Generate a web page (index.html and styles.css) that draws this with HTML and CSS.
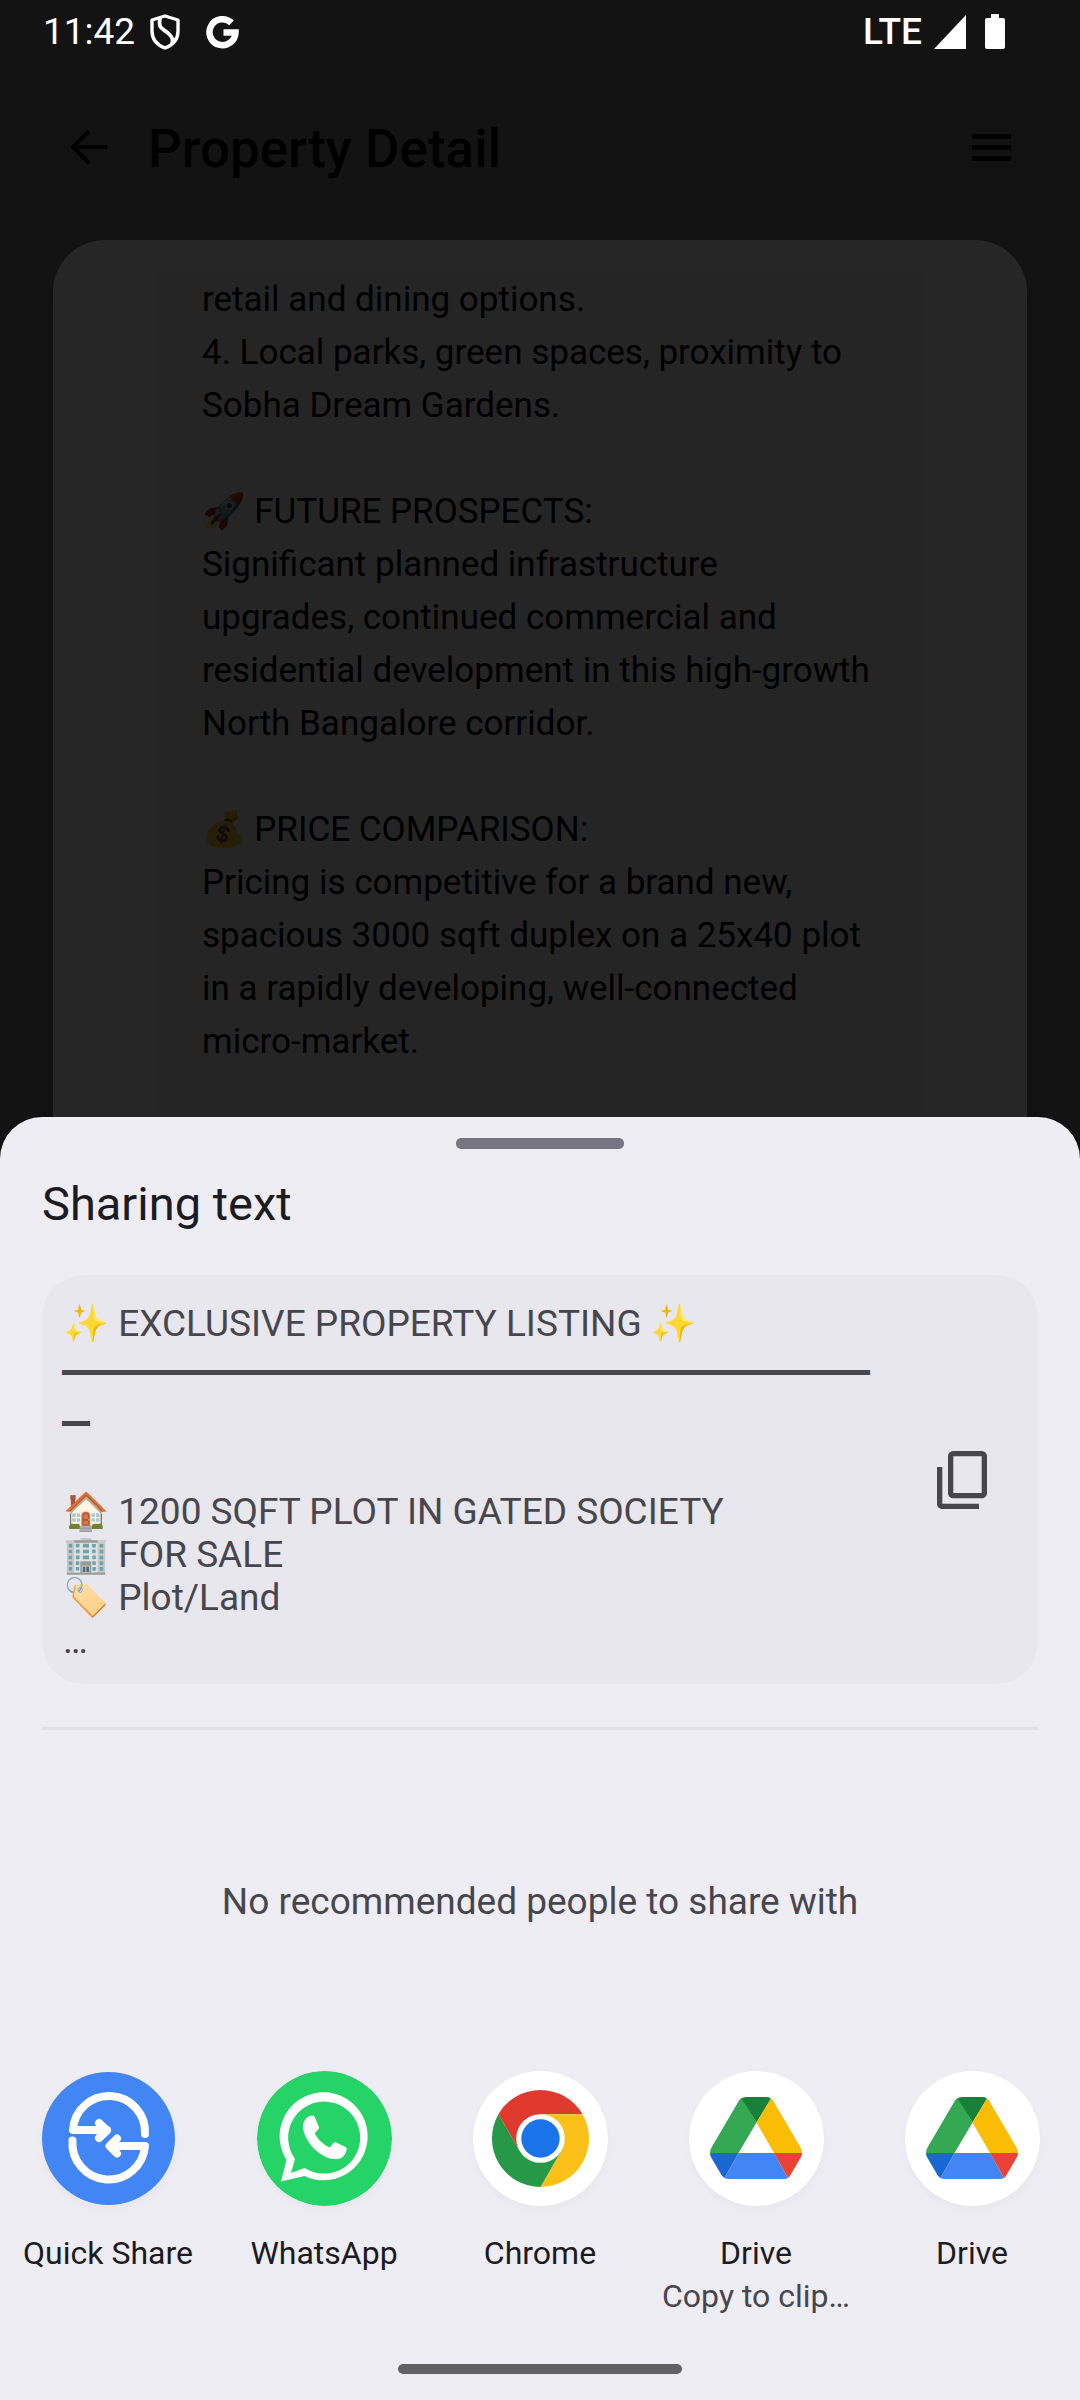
FILE: index.html
```html
<!DOCTYPE html>
<html lang="en">
<head>
<meta charset="utf-8">
<meta name="viewport" content="width=device-width, initial-scale=1">
<title>Property Detail</title>
<link rel="stylesheet" href="styles.css">
</head>
<body>
<div class="screen">
  <div class="status-bar">
    <div class="status-group">
      <span class="clock">11:42</span>
      <svg class="status-shield" viewBox="0 0 30 36" aria-hidden="true"><path d="M15 2 28 6v11c0 8-5 14-13 17C7 31 2 25 2 17V6z" fill="none" stroke="#fff" stroke-width="3.400" stroke-linejoin="round"/><path d="M10 4c-2 12 3 10 9 16 4 4 4 6 3 10" fill="none" stroke="#fff" stroke-width="3.800"/></svg>
      <svg class="status-google" viewBox="0 0 33 34" aria-hidden="true"><path d="M25.500 7.800A13 13 0 1 0 29.500 17.500H17.500" fill="none" stroke="#fff" stroke-width="6.500"/></svg>
    </div>
    <div class="status-group">
      <span class="network">LTE</span>
      <svg class="status-signal" viewBox="0 0 32 34" aria-hidden="true"><path d="M32 0v34H0z" fill="#fff"/></svg>
      <svg class="status-battery" viewBox="0 0 20 35" aria-hidden="true"><path d="M6 0h8v4h4a2 2 0 0 1 2 2v27a2 2 0 0 1-2 2H2a2 2 0 0 1-2-2V6a2 2 0 0 1 2-2h4z" fill="#fff"/></svg>
    </div>
  </div>

  <header class="app-bar">
    <button class="round-button" type="button" aria-label="Back"><svg width="36" height="36" viewBox="0 0 36 36" aria-hidden="true"><path d="M36 18H3M18 2 2 18l16 16" fill="none" stroke="#000" stroke-width="4"/></svg></button>
    <h1 class="app-title">Property Detail</h1>
    <button class="round-button" type="button" aria-label="Menu"><svg width="39" height="27" viewBox="0 0 39 27" aria-hidden="true"><path d="M0 2.500h39M0 13.500h39M0 24.500h39" stroke="#000" stroke-width="4.500"/></svg></button>
  </header>

  <main class="detail-card">
    <div class="description">
      <p>retail and dining options.<br>4. Local parks, green spaces, proximity to Sobha Dream Gardens.</p>
      <p>🚀 FUTURE PROSPECTS:<br>Significant planned infrastructure upgrades, continued commercial and residential development in this high-growth North Bangalore corridor.</p>
      <p>💰 PRICE COMPARISON:<br>Pricing is competitive for a brand new, spacious 3000 sqft duplex on a 25x40 plot in a rapidly developing, well-connected micro-market.</p>
    </div>
  </main>

  <div class="scrim"></div>

  <section class="sheet" role="dialog" aria-labelledby="sheet-title">
    <div class="drag-handle"></div>
    <h2 class="sheet-title" id="sheet-title">Sharing text</h2>
    <div class="preview">
      <div class="preview-text">
        <p>✨ EXCLUSIVE PROPERTY LISTING ✨</p>
        <p class="preview-rule">━━━━━━━━━━━━━━━━━━━━━━━━━━━━━━━━</p>
        <p class="preview-body">🏠 1200 SQFT PLOT IN GATED SOCIETY<br>🏢 FOR SALE<br>🏷️ Plot/Land<br>…</p>
      </div>
      <button class="copy-button" type="button" aria-label="Copy text"><svg width="50" height="58" viewBox="0 0 50 58" aria-hidden="true"><g fill="none" stroke="#47464c" stroke-width="5.300"><rect x="13.650" y="2.650" width="33.700" height="42" rx="2.500"/><path d="M2.650 16v37a2.300 2.300 0 0 0 2.300 2.350H42"/></g></svg></button>
    </div>
    <hr class="divider">
    <p class="empty-note">No recommended people to share with</p>
    <div class="targets">
      <button class="target" type="button">
        <svg class="target-icon" viewBox="0 0 135 135" aria-hidden="true"><circle cx="67.500" cy="67.500" r="66.500" fill="#4285f4"/><g fill="none" stroke="#fff" stroke-width="8" stroke-linecap="round" stroke-linejoin="round"><path d="M104 63A35.500 35.500 0 0 0 32 59H66M58 52l8 7.500-8 7.500"/><path d="M31.500 69.500A35.500 35.500 0 0 0 104 75H69M76 67.500l-7.500 7.500 7.500 7.500"/></g></svg>
        <span class="target-name">Quick Share</span>
      </button>
      <button class="target" type="button">
        <svg class="target-icon" viewBox="0 0 135 135" aria-hidden="true"><circle cx="67.500" cy="67.500" r="67.500" fill="#25d366"/><path fill="#fff" fill-rule="evenodd" d="M24 110.500 29.500 89A44 44 0 1 1 47.500 105zM34 102l13.500-5 1.500.7A36 36 0 1 0 36.500 85.500l1.500 2.500z"/><path fill="#fff" d="M55.500 44.500c1.500 0 2 .8 2.600 2.200L62 56c.4 1.200.1 1.800-4.200 6.200 2.700 6.200 9 12 15.200 14.200 4-5 4.500-5.500 6-4.800l9.500 4.300c1.200.6 1.300 1.200 1 3-.8 6.500-6.500 9.600-12 9.200C61 87 46.500 68 46 56c0-6 4-11.500 9.500-11.500z"/></svg>
        <span class="target-name">WhatsApp</span>
      </button>
      <button class="target" type="button">
        <svg class="target-icon" viewBox="0 0 135 135" aria-hidden="true"><circle cx="67.500" cy="67.500" r="67.500" fill="#fff"/><path d="M25.400 43.200A48.600 48.600 0 0 1 109.600 43.200H67.500L46.400 79.600z" fill="#e0392e"/><path d="M109.600 43.200A48.600 48.600 0 0 1 67.500 116L88.500 79.600 67.500 43.200z" fill="#fcc119"/><path d="M67.500 116A48.600 48.600 0 0 1 25.400 43.200L46.400 79.600H88.500z" fill="#269848"/><circle cx="67.500" cy="67.500" r="24.300" fill="#fff"/><circle cx="67.500" cy="67.500" r="19.200" fill="#1a73e8"/></svg>
        <span class="target-name">Chrome</span>
      </button>
      <button class="target" type="button">
        <svg class="target-icon" viewBox="0 0 135 135" aria-hidden="true"><use href="#drive-logo"/></svg>
        <span class="target-name">Drive</span>
        <span class="target-detail">Copy to clip…</span>
      </button>
      <button class="target" type="button">
        <svg class="target-icon" viewBox="0 0 135 135" aria-hidden="true"><g id="drive-logo"><circle cx="67.500" cy="67.500" r="67.500" fill="#fff"/><path d="M53 27 67.500 51.500 49.500 82H21q0-3 1.500-5.500L50 29.500Q51.500 27 53 27z" fill="#34a853"/><path d="M52.500 27.500Q54 26 57 26H78Q80.500 26 82 27.500L67.500 51.500z" fill="#188038"/><path d="M82 27.500Q83 28 84 29.500L111.500 76.500Q113 79 113 82H85L67.500 51.500z" fill="#fbbc04"/><path d="M21 82H49.500L35.500 107Q34 106 32.500 104L22.500 87Q21 84.500 21 82z" fill="#1967d2"/><path d="M49.500 82H85L99 107Q97.500 108 95 108H39.500Q37 108 35.500 107z" fill="#4285f4"/><path d="M85 82H113Q113 84.500 111.500 87L101.500 104Q100.500 106 99 107z" fill="#ea4335"/></g></svg>
        <span class="target-name">Drive</span>
      </button>
    </div>
    <div class="nav-handle"></div>
  </section>
</div>
</body>
</html>
```
FILE: styles.css
```css
* { box-sizing: border-box; }

body, h1, h2, p { margin: 0; }

body {
  font-family: Roboto, "Liberation Sans", "Noto Color Emoji", sans-serif;
  background: #808080;
}

button {
  padding: 0;
  border: 0;
  background: none;
  color: inherit;
  font: inherit;
}

svg { display: block; }

.screen {
  position: relative;
  display: flex;
  flex-direction: column;
  height: 100vh;
  min-height: 1800px;
  overflow: hidden;
  background: #808080;
}

.status-bar {
  position: relative;
  z-index: 2;
  display: flex;
  justify-content: space-between;
  padding: 8px 75px 8px 43px;
  color: #fff;
  font-size: 37px;
  line-height: 47px;
}

.status-group { display: flex; align-items: center; }
.network { font-weight: 500; }
.status-shield { width: 30px; height: 36px; margin-left: 15px; }
.status-google { width: 33px; height: 34px; margin-left: 26px; }
.status-signal { width: 32px; height: 34px; margin-left: 12px; }
.status-battery { width: 20px; height: 35px; margin-left: 19px; }

.app-bar {
  display: flex;
  align-items: center;
  padding: 37px 42px 46px;
}

.round-button {
  display: grid;
  place-items: center;
  width: 94px;
  height: 94px;
  border-radius: 50%;
  background: #797979;
}

.app-title {
  flex: 1;
  padding: 4px 0 0 12px;
  font-size: 53px;
  font-weight: 500;
  line-height: 62px;
}

.detail-card {
  flex: 1;
  margin: 0 53px;
  padding: 33px 105px 0;
  border-radius: 52px 52px 0 0;
  background: #fff;
  box-shadow: 0 8px 32px rgba(0, 0, 0, 0.2);
}

.description {
  height: 100%;
  padding: 0 48px 0 44px;
  background: #f8f8f8;
  font-size: 35px;
  line-height: 53px;
}

.description p { margin-bottom: 53px; }

.scrim {
  position: absolute;
  inset: 0;
  background: rgba(0, 0, 0, 0.85);
}

.sheet {
  position: absolute;
  inset: auto 0 0;
  display: flex;
  flex-direction: column;
  padding: 21px 0 26px;
  border-radius: 42px 42px 0 0;
  background: #eeedf4;
  color: #1b1b21;
}

.drag-handle {
  align-self: center;
  width: 168px;
  height: 11px;
  border-radius: 5px;
  background: #777680;
}

.sheet-title {
  margin: 27px 42px 44px;
  font-size: 47px;
  font-weight: 400;
  line-height: 55px;
}

.preview {
  display: flex;
  align-items: center;
  justify-content: space-between;
  margin: 0 42px;
  padding: 22px 51px 22px 21px;
  border-radius: 42px;
  background: #e8e7ed;
  color: #47464c;
  font-size: 37px;
  line-height: 43px;
}

.preview-text {
  width: 812px;
  padding-top: 5px;
}

.preview-rule {
  overflow-wrap: anywhere;
  font-family: "Noto Sans CJK SC", monospace;
  font-size: 26px;
  line-height: 51px;
  -webkit-text-stroke: 2px #47464c;
}

.preview-body { margin-top: 43px; }

.divider {
  width: calc(100% - 84px);
  height: 3px;
  margin: 43px 42px 0;
  border: 0;
  background: #e2e1e7;
}

.empty-note {
  margin: 150px 42px 148px;
  color: #47464c;
  font-size: 37px;
  line-height: 43px;
  text-align: center;
}

.targets {
  display: grid;
  grid-template-columns: repeat(5, 1fr);
  align-items: start;
}

.target {
  display: flex;
  flex-direction: column;
  align-items: center;
  min-width: 0;
  padding: 0 12px;
  font-size: 32px;
  line-height: 43px;
}

.target-icon {
  width: 135px;
  height: 135px;
  margin-bottom: 26px;
  border-radius: 50%;
  box-shadow: 0 4px 8px rgba(0, 0, 0, 0.03);
}

.target-detail {
  color: #47464c;
  white-space: nowrap;
}

.nav-handle {
  align-self: center;
  width: 284px;
  height: 10px;
  margin-top: 46px;
  border-radius: 5px;
  background: #616065;
}
```
